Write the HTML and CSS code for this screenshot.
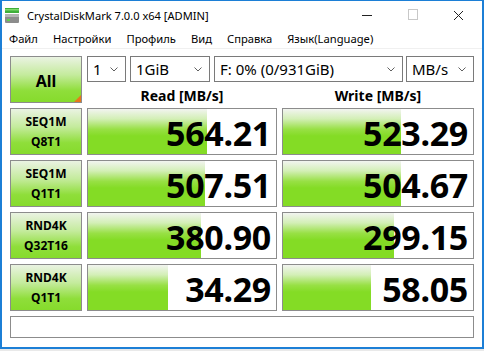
FILE: index.html
```html
<!DOCTYPE html>
<html lang="ru">
<head>
    <meta charset="UTF-8">
    <title>CrystalDiskMark 7.0.0 x64 [ADMIN]</title>
    <link rel="stylesheet" href="styles.css">
</head>
<body>
    <div class="window">
        <div class="titlebar">
            <svg class="app-icon" width="14" height="15" viewBox="0 0 14 15">
                <rect x="0" y="0" width="14" height="5" fill="#3fae3a"/>
                <rect x="0" y="1" width="14" height="1.5" fill="#7fd96a"/>
                <rect x="0" y="6" width="14" height="9" rx="1" fill="#8c8c8c"/>
                <rect x="0" y="6" width="14" height="3" fill="#b5b5b5"/>
                <rect x="2" y="11" width="3" height="2" fill="#5fd24a"/>
            </svg>
            <span class="title">CrystalDiskMark 7.0.0 x64 [ADMIN]</span>
            <div class="controls">
                <svg width="46" height="28" viewBox="0 0 46 28"><line x1="18" y1="14.5" x2="28" y2="14.5" stroke="#222" stroke-width="1"/></svg>
                <svg width="46" height="28" viewBox="0 0 46 28"><rect x="18.5" y="8.5" width="9" height="10" fill="none" stroke="#c8c8c8" stroke-width="1"/></svg>
                <svg width="46" height="28" viewBox="0 0 46 28"><path d="M18 10 L27 19 M27 10 L18 19" stroke="#222" stroke-width="1"/></svg>
            </div>
        </div>
        <div class="menubar">
            <span>Файл</span>
            <span>Настройки</span>
            <span>Профиль</span>
            <span>Вид</span>
            <span>Справка</span>
            <span>Язык(Language)</span>
        </div>
        <div class="main">
            <div class="btn all">All<span class="corner"></span></div>
            <div class="top">
                <div class="combos">
                    <div class="combo c-count"><span>1</span><svg class="chev" width="8" height="5" viewBox="0 0 8 5"><polyline points="0.5,0.5 4,4 7.5,0.5" fill="none" stroke="#606060"/></svg></div>
                    <div class="combo c-size"><span>1GiB</span><svg class="chev" width="8" height="5" viewBox="0 0 8 5"><polyline points="0.5,0.5 4,4 7.5,0.5" fill="none" stroke="#606060"/></svg></div>
                    <div class="combo c-drive"><span>F: 0% (0/931GiB)</span><svg class="chev" width="8" height="5" viewBox="0 0 8 5"><polyline points="0.5,0.5 4,4 7.5,0.5" fill="none" stroke="#606060"/></svg></div>
                    <div class="combo c-unit"><span>MB/s</span><svg class="chev" width="8" height="5" viewBox="0 0 8 5"><polyline points="0.5,0.5 4,4 7.5,0.5" fill="none" stroke="#606060"/></svg></div>
                </div>
                <div class="heads">
                    <div class="head read">Read [MB/s]</div>
                    <div class="head write">Write [MB/s]</div>
                </div>
            </div>

            <div class="btn">SEQ1M<br>Q8T1</div>
            <div class="cell"><div class="fill" style="width: 119px"></div><span class="val">564.21</span></div>
            <div class="cell"><div class="fill" style="width: 118px"></div><span class="val">523.29</span></div>

            <div class="btn">SEQ1M<br>Q1T1</div>
            <div class="cell"><div class="fill" style="width: 117px"></div><span class="val">507.51</span></div>
            <div class="cell"><div class="fill" style="width: 118px"></div><span class="val">504.67</span></div>

            <div class="btn">RND4K<br>Q32T16</div>
            <div class="cell"><div class="fill" style="width: 113px"></div><span class="val">380.90</span></div>
            <div class="cell"><div class="fill" style="width: 111px"></div><span class="val">299.15</span></div>

            <div class="btn">RND4K<br>Q1T1</div>
            <div class="cell"><div class="fill" style="width: 80px"></div><span class="val">34.29</span></div>
            <div class="cell"><div class="fill" style="width: 88px"></div><span class="val">58.05</span></div>

            <div class="status"></div>
        </div>
    </div>
</body>
</html>
```

FILE: styles.css
```css
html {
    background-color: #e9e9e9;
}
body {
    margin: 0;
    font-family: "Noto Sans", "Open Sans", sans-serif;
    color: #000;
}
.window {
    box-sizing: border-box;
    width: 484px;
    height: 349px;
    background-color: #fff;
    border: 2px solid #1c7fd6;
    border-top-width: 1px;
    overflow: hidden;
}
.titlebar {
    display: flex;
    align-items: center;
    height: 27px;
    padding-left: 3px;
}
.app-icon {
    margin-top: 2px;
}
.title {
    font-size: 11.1px;
    margin-left: 8px;
    margin-top: 1px;
}
.controls {
    display: flex;
    margin-left: auto;
    margin-top: 1px;
}
.menubar {
    display: flex;
    align-items: center;
    height: 20px;
    padding-left: 7px;
    gap: 15px;
    font-size: 11.2px;
    border-bottom: 1px solid #f0f0f0;
}
.main {
    display: grid;
    grid-template-columns: 72px 190px 192px;
    grid-template-rows: repeat(5, 47px) 22px;
    gap: 5px;
    padding: 7px 8px 0;
}
.btn {
    position: relative;
    box-sizing: border-box;
    border: 1px solid #8c8c8c;
    background: linear-gradient(to bottom, #eaf3e2 0%, #c4eb9c 40%, #8fde3a 75%, #86db2c 100%);
    display: flex;
    align-items: center;
    justify-content: center;
    text-align: center;
    font-weight: bold;
    font-size: 12px;
    line-height: 20px;
    padding-top: 1px;
}
.all {
    font-size: 16px;
    padding-top: 2px;
}
.corner {
    position: absolute;
    right: 0;
    bottom: 0;
    width: 0;
    height: 0;
    border-left: 7px solid transparent;
    border-bottom: 7px solid #e8781c;
}
.top {
    grid-column: 2 / 4;
    display: flex;
    flex-direction: column;
}
.combos {
    display: flex;
    height: 26px;
}
.combo {
    box-sizing: border-box;
    display: flex;
    align-items: center;
    justify-content: space-between;
    height: 26px;
    border: 1px solid #7a7a7a;
    padding: 0 7px 1px 5px;
    font-size: 15px;
    background-color: #fff;
}
.chev {
    margin-top: 2px;
}
.c-count {
    width: 39px;
}
.c-size {
    width: 80px;
    margin-left: 4px;
}
.c-drive {
    width: 189px;
    margin-left: 4px;
}
.c-unit {
    width: 68px;
    margin-left: 3px;
}
.heads {
    display: flex;
    gap: 5px;
    margin-top: 5px;
}
.head {
    font-weight: bold;
    font-size: 14px;
    text-align: center;
    line-height: 18px;
}
.read {
    width: 190px;
}
.write {
    width: 192px;
}
.cell {
    position: relative;
    box-sizing: border-box;
    border: 1px solid #8c8c8c;
    background-color: #fff;
    display: flex;
    align-items: center;
    justify-content: flex-end;
    overflow: hidden;
}
.fill {
    position: absolute;
    left: 0;
    top: 0;
    bottom: 0;
    background: linear-gradient(to bottom, #f2f4f0 0%, #d3efb6 22%, #98e045 45%, #84dc25 60%, #84dc25 100%);
}
.val {
    position: relative;
    font-weight: bold;
    font-size: 34px;
    line-height: 40px;
    padding-right: 5px;
    margin-top: 2px;
    letter-spacing: -0.3px;
}
.status {
    grid-column: 1 / 4;
    box-sizing: border-box;
    border: 1px solid #8c8c8c;
    background-color: #fff;
}
```
